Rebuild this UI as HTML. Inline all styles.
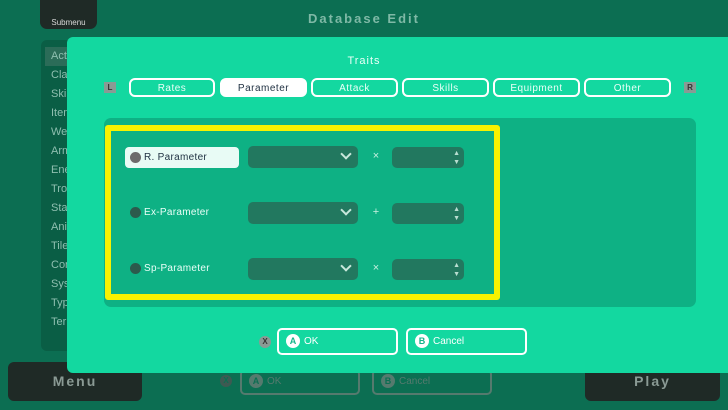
<!DOCTYPE html>
<html><head><meta charset="utf-8"><style>
*{box-sizing:border-box;margin:0;padding:0}
body{width:728px;height:410px;overflow:hidden;background:#0c6e52;font-family:"Liberation Sans",sans-serif;position:relative}
.abs{position:absolute}
.sub{left:40px;top:0;width:57px;height:29px;background:#1f2a26;border-radius:0 0 7px 7px;color:#d8d8d8;font-size:8px;text-align:center;padding-top:18px}
.title{left:0;width:728px;top:11px;text-align:center;color:#7fb9a6;font-size:13px;font-weight:bold;letter-spacing:2px}
.side{left:41px;top:40px;width:60px;height:311px;background:#0a5e45;border-radius:6px}
.side div{color:#8fbfb0;font-size:11px;height:19px;padding-left:10px;line-height:19px}
.dlg{left:67px;top:37px;width:680px;height:336px;background:#13d8a0;border-radius:6px}
.tab{top:78px;height:19px;border:2px solid #fff;border-radius:6px;color:#eafff8;font-size:10px;text-align:center;line-height:17px;letter-spacing:.5px}
.tab.on{background:#fff;color:#234}
.key{width:12px;height:11px;background:#8a9a94;color:#333;font-size:8px;text-align:center;line-height:11px;font-weight:bold}
.panel{left:104px;top:118px;width:592px;height:189px;background:#0eb184;border-radius:7px}
.yel{left:105px;top:125px;width:395px;height:175px;border:6px solid #f7f200;border-radius:3px}
.lbl{left:125px;height:21px;width:114px;color:#eafff8;font-size:10px;line-height:21px;padding-left:19px;border-radius:4px;letter-spacing:.3px}
.lbl::before{content:"";position:absolute;left:5px;top:5px;width:11px;height:11px;border-radius:50%;background:#2c5a4c}
.lbl.on{background:#e8fbf5;color:#234}
.lbl.on::before{background:#6b6b6b}
.dd{left:248px;width:110px;height:22px;background:#22785f;border-radius:5px}
.dd::after{content:"";position:absolute;right:8px;top:4px;width:6px;height:6px;border-right:2px solid #c8e8dc;border-bottom:2px solid #c8e8dc;transform:rotate(45deg)}
.sp{left:392px;width:72px;height:21px;background:#22785f;border-radius:5px;color:#b8ddd0;font-size:7px;text-align:right;padding-right:4px;line-height:9px;padding-top:2px}
.op{left:370px;width:12px;color:#c8f0e0;font-size:11px;text-align:center}
.btn{height:27px;border:2px solid #fff;border-radius:5px;color:#fff;font-size:10px;line-height:24px;padding-left:25px}
.circ{position:absolute;left:7px;top:4px;width:14px;height:14px;border-radius:50%;background:#fff;color:#13b58a;font-size:9px;font-weight:bold;text-align:center;line-height:14px}
.big{top:362px;height:39px;background:#1f2a26;border-radius:6px;color:#8a9a94;font-size:14px;font-weight:bold;letter-spacing:2px;text-align:center;line-height:39px}
.gb{top:369px;width:120px;height:26px;border:2px solid #557a6e;border-radius:5px;color:#557a6e;font-size:10px;line-height:22px;padding-left:25px}
.gb .circ{background:#557a6e;color:#0c6e52;top:3px}
</style></head><body>
<div class="abs sub">Submenu</div>
<div class="abs title">Database Edit</div>
<div class="abs side" style="padding-top:7px">
<div style="background:#2b6c58;margin:0 4px;padding-left:6px">Actors</div><div>Classes</div><div>Skills</div><div>Items</div><div>Weapons</div><div>Armors</div><div>Enemies</div><div>Troops</div><div>States</div><div>Animations</div><div>Tilesets</div><div>Common</div><div>System</div><div>Types</div><div>Terms</div></div>
<div class="abs big" style="left:8px;width:134px">Menu</div>
<div class="abs big" style="left:585px;width:135px">Play</div>
<div class="abs" style="left:220px;top:375px;width:12px;height:12px;border-radius:50%;background:#3d5a52;color:#0c6e52;font-size:8px;text-align:center;line-height:12px;font-weight:bold">X</div>
<div class="abs gb" style="left:240px"><span class="circ">A</span>OK</div>
<div class="abs gb" style="left:372px"><span class="circ">B</span>Cancel</div>
<div class="abs dlg"></div>
<div class="abs" style="left:0;width:728px;top:55px;text-align:center;color:#eafff8;font-size:11px;letter-spacing:1px">Traits</div>
<div class="abs key" style="left:104px;top:82px">L</div>
<div class="abs key" style="left:684px;top:82px">R</div>
<div class="abs tab" style="left:129px;width:86px">Rates</div>
<div class="abs tab on" style="left:220px;width:87px">Parameter</div>
<div class="abs tab" style="left:311px;width:87px">Attack</div>
<div class="abs tab" style="left:402px;width:87px">Skills</div>
<div class="abs tab" style="left:493px;width:87px">Equipment</div>
<div class="abs tab" style="left:584px;width:87px">Other</div>
<div class="abs panel"></div>
<div class="abs yel"></div>
<div class="abs lbl on" style="top:147px">R. Parameter</div>
<div class="abs lbl" style="top:202px">Ex-Parameter</div>
<div class="abs lbl" style="top:258px">Sp-Parameter</div>
<div class="abs dd" style="top:146px"></div>
<div class="abs dd" style="top:202px"></div>
<div class="abs dd" style="top:258px"></div>
<div class="abs op" style="top:150px">×</div>
<div class="abs op" style="top:206px">+</div>
<div class="abs op" style="top:262px">×</div>
<div class="abs sp" style="top:147px">▲<br>▼</div>
<div class="abs sp" style="top:203px">▲<br>▼</div>
<div class="abs sp" style="top:259px">▲<br>▼</div>
<div class="abs" style="left:259px;top:336px;width:12px;height:12px;border-radius:50%;background:#8a9a94;color:#333;font-size:8px;text-align:center;line-height:12px;font-weight:bold">X</div>
<div class="abs btn" style="left:277px;top:328px;width:121px"><span class="circ">A</span>OK</div>
<div class="abs btn" style="left:406px;top:328px;width:121px"><span class="circ">B</span>Cancel</div>
</body></html>
